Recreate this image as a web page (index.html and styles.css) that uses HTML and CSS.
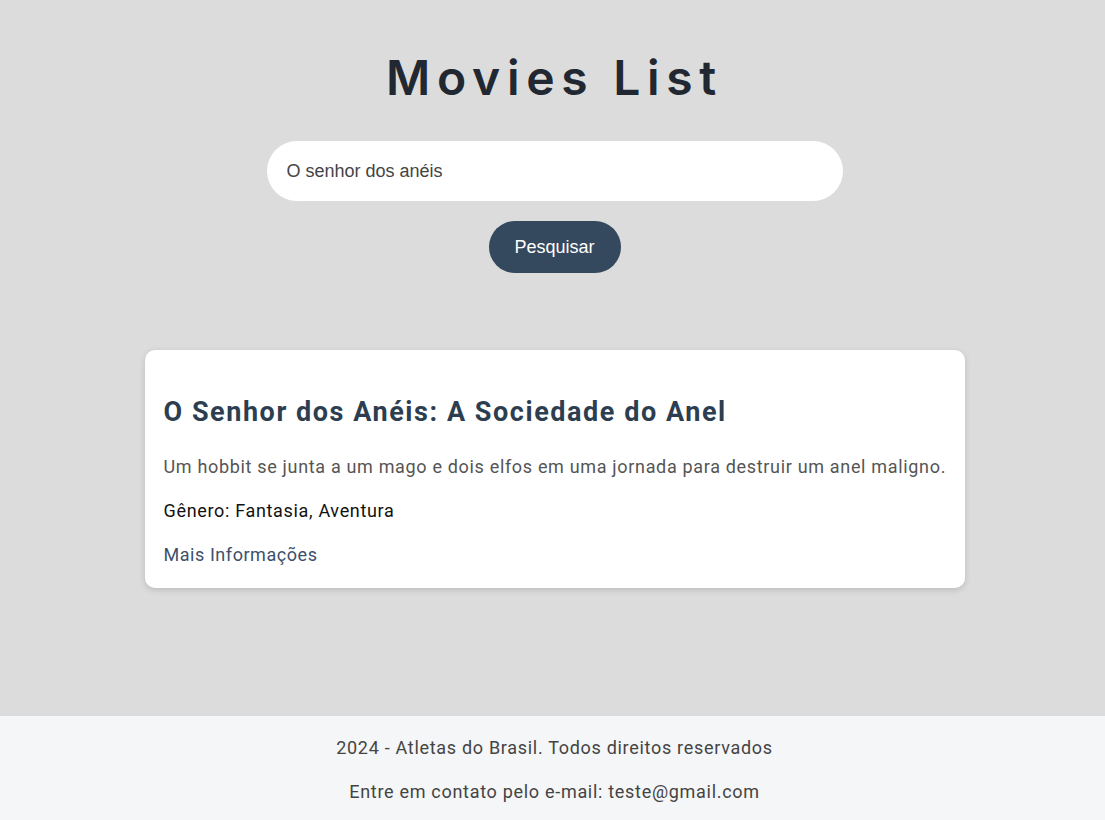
FILE: index.html
```html
<!DOCTYPE html>
<html lang="pt-BR">
<head>
<meta charset="utf-8">
<title>Movies List</title>
<link rel="stylesheet" href="styles.css">
</head>
<body>
<div class="page">
  <header class="top">
    <h1 class="title">Movies List</h1>
    <form class="search">
      <input class="search-input" type="text" value="O senhor dos anéis">
      <button class="search-btn" type="button">Pesquisar</button>
    </form>
  </header>
  <main class="results">
    <article class="card">
      <h2 class="card-title">O Senhor dos Anéis: A Sociedade do Anel</h2>
      <p class="card-desc">Um hobbit se junta a um mago e dois elfos em uma jornada para destruir um anel maligno.</p>
      <p class="card-genre">Gênero: Fantasia, Aventura</p>
      <a class="card-link" href="#">Mais Informações</a>
    </article>
  </main>
</div>
<footer class="footer">
  <p>2024 - Atletas do Brasil. Todos direitos reservados</p>
  <p>Entre em contato pelo e-mail: teste@gmail.com</p>
</footer>
</body>
</html>
```
FILE: styles.css
```css
* { box-sizing: border-box; }
html, body { margin: 0; padding: 0; }
body {
  background: #dcdcdc;
  font-family: "Roboto", "Liberation Sans", sans-serif;
  min-height: 820px;
  display: flex;
  flex-direction: column;
}
.page { flex: 1; padding-left: 4px; }
.top {
  display: flex;
  flex-direction: column;
  align-items: center;
  padding-top: 49px;
}
.title {
  margin: 0;
  font-family: "Inter", sans-serif;
  font-weight: 600;
  font-size: 48px;
  letter-spacing: 6.7px;
  color: #222831;
  line-height: 58px;
}
.search {
  display: flex;
  flex-direction: column;
  align-items: center;
  gap: 20px;
  margin-top: 34px;
}
.search-input {
  width: 576px;
  height: 60px;
  border: none;
  border-radius: 30px;
  padding: 0 20px;
  font-family: "Liberation Sans", Arial, sans-serif;
  font-size: 18px;
  color: #444;
  background: #fff;
  outline: none;
}
.search-btn {
  width: 132px;
  height: 52px;
  border: none;
  border-radius: 26px;
  background: #34495e;
  color: #fff;
  font-family: "Liberation Sans", Arial, sans-serif;
  font-size: 18px;
}
.results {
  display: flex;
  justify-content: center;
  margin-top: 77px;
}
.card {
  width: 820px;
  background: #fff;
  border-radius: 10px;
  box-shadow: 0 2px 6px rgba(0,0,0,0.15);
  padding: 46px 12px 20px 19px;
}
.card-title {
  margin: 0 0 26px;
  font-family: "Roboto", sans-serif;
  font-weight: 700;
  font-size: 27px;
  line-height: 32px;
  letter-spacing: 1.55px;
  color: #2c3e50;
}
.card-desc, .card-genre {
  margin: 0 0 18px;
  font-size: 18px;
  line-height: 26px;
  letter-spacing: 0.67px;
  white-space: nowrap;
}
.card-desc { color: #555; }
.card-genre { color: #111; }
.card-link {
  display: block;
  font-size: 18px;
  line-height: 26px;
  letter-spacing: 0.55px;
  color: #3d4f6b;
  text-decoration: none;
}
.footer {
  background: #f5f6f7;
  text-align: center;
  color: #444;
  font-size: 18px;
  letter-spacing: 0.7px;
  padding: 20px 0 16px 4px;
}
.footer p { margin: 0 0 20px; line-height: 24px; }
.footer p:last-child { margin-bottom: 0; }
```
